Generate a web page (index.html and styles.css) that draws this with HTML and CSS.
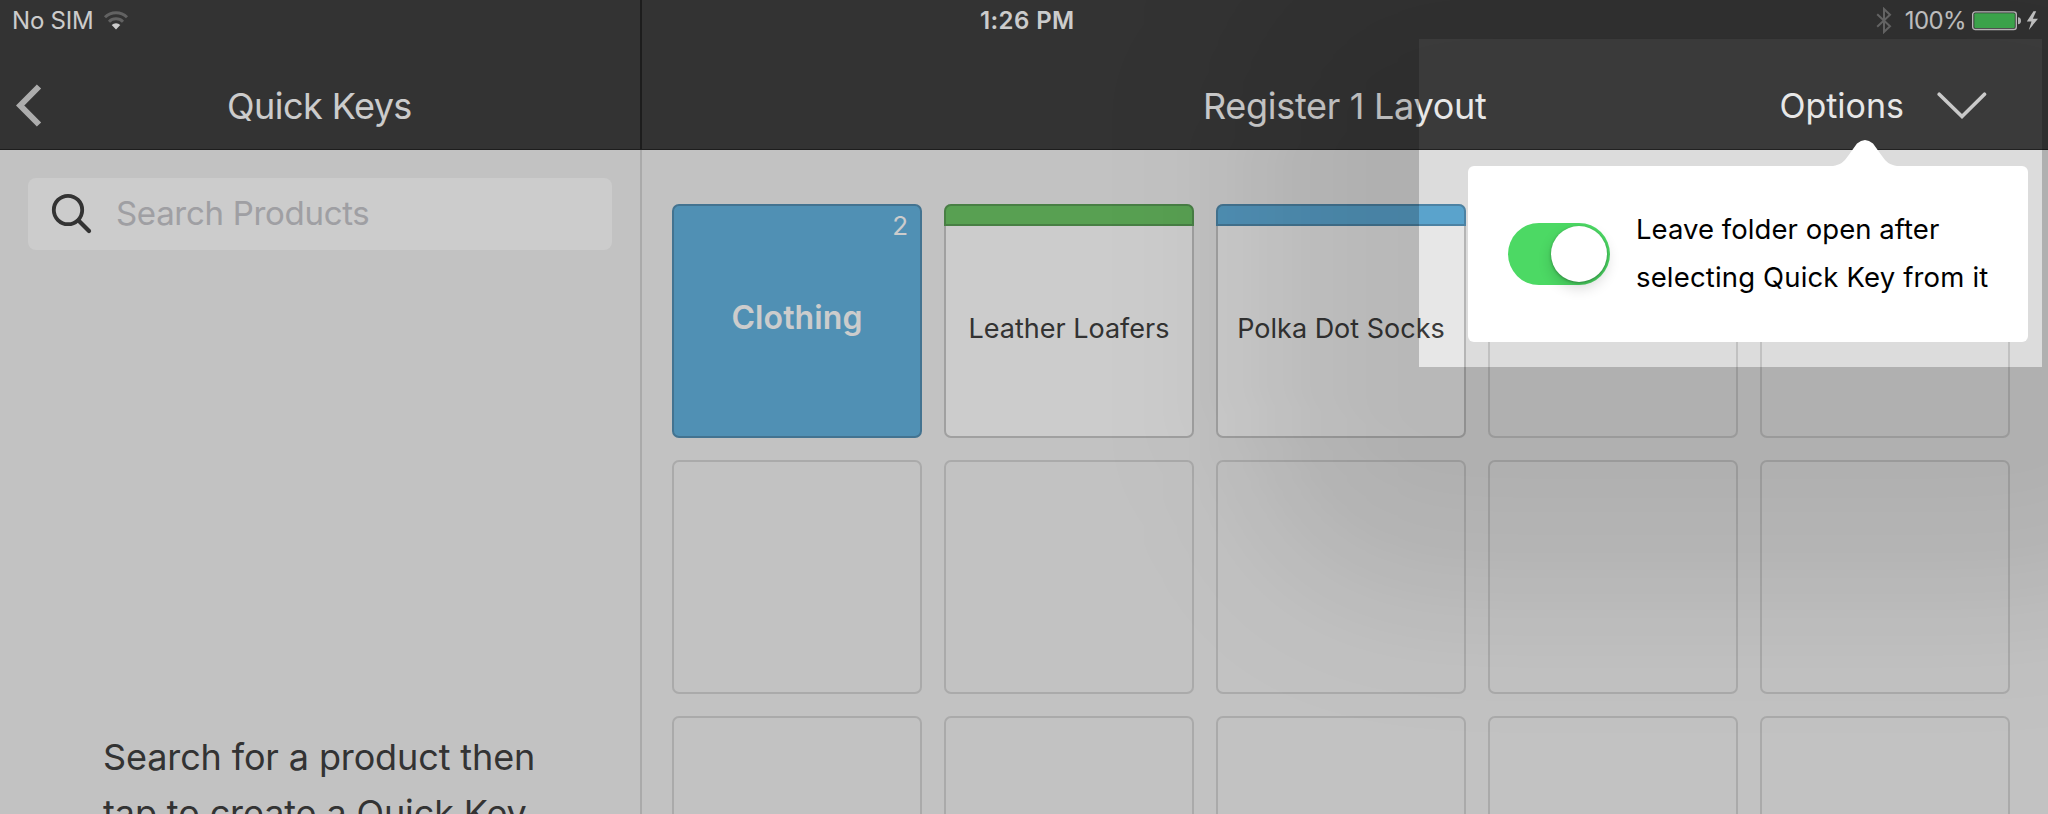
FILE: index.html
```
<!DOCTYPE html>
<html lang="en">
<head>
<meta charset="utf-8">
<title>Quick Keys</title>
<link rel="stylesheet" href="styles.css">
</head>
<body>
<div class="app">
  <aside class="sidebar">
    <header class="bar">
      <div class="status">
        <span class="carrier">No SIM</span>
        <svg class="wifi" width="26" height="20" viewBox="0 0 26 20">
          <path d="M2 6.2a15.6 15.6 0 0 1 22 0M6 10.7a10 10 0 0 1 14 0" fill="none" stroke="#7b7b7b" stroke-width="3"/>
          <path d="M13 18.5l-4.300-4.600a6.300 6.300 0 0 1 8.600 0z" fill="#fff"/>
        </svg>
      </div>
      <div class="titles left-titles">
        <svg class="back" width="26" height="44" viewBox="0 0 26 44"><path d="M23 2.500L4.200 21.500L23 40.500" fill="none" stroke="#d9d9d9" stroke-width="6"/></svg>
        <h1 class="title quick">Quick Keys</h1>
      </div>
    </header>
    <div class="sidebar-body">
      <div class="search">
        <svg width="42" height="42" viewBox="0 0 42 42"><circle cx="17" cy="17" r="14.200" fill="none" stroke="#404040" stroke-width="3.800"/><path d="M27.500 27.500L38 38" stroke="#404040" stroke-width="4.200" stroke-linecap="round"/></svg>
        <span class="placeholder">Search Products</span>
      </div>
      <p class="hint"><span class="hint-one">Search for a product then</span><br><span class="hint-two">tap to create a Quick Key</span></p>
    </div>
  </aside>
  <main class="main">
    <header class="bar">
      <div class="status main-status">
        <span class="clock">1:26 PM</span>
        <div class="power">
          <svg class="bt" width="16" height="27" viewBox="0 0 16 27"><path d="M1.200 7.200L14 19.300L8 25V2L14 7.700L1.200 19.800" fill="none" stroke="#868686" stroke-width="2"/></svg>
          <span class="percent">100%</span>
          <svg class="battery" width="70" height="20" viewBox="0 0 70 20"><rect x=".7" y=".9" width="43.600" height="17.600" rx="2.600" fill="none" stroke="#f4f4f4" stroke-width="1.400"/><rect x="2.300" y="2.300" width="40.500" height="14.800" rx="1" fill="#50dc65"/><path d="M46 6.300q3 .4 3 3.500t-3 3.500z" fill="#eee"/><path d="M61.500 .3L54.800 10.500H59.500L56.800 19L66 7.800H60.800L64.200 .3z" fill="#fff"/></svg>
        </div>
      </div>
      <div class="titles main-titles">
        <h2 class="title register">Register 1 Layout</h2>
        <span class="title options">Options</span>
        <svg class="chevron" width="50" height="28" viewBox="0 0 50 28"><path d="M2.200 2.200L25 24.500L47.500 2.200" fill="none" stroke="#dedede" stroke-width="3.600" stroke-linecap="round"/></svg>
      </div>
    </header>
    <div class="grid">
      <div class="tile folder"><span class="count">2</span><span class="folder-name">Clothing</span></div>
      <div class="tile product"><div class="stripe green"></div><span class="name loafers">Leather Loafers</span></div>
      <div class="tile product"><div class="stripe blue"></div><span class="name socks">Polka Dot Socks</span></div>
      <div class="tile"></div><div class="tile"></div>
      <div class="tile"></div><div class="tile"></div><div class="tile"></div><div class="tile"></div><div class="tile"></div>
      <div class="tile"></div><div class="tile"></div><div class="tile"></div><div class="tile"></div><div class="tile"></div>
    </div>
  </main>
  <div class="glow"></div>
  <div class="spotlight"></div>
  <section class="popover">
    <svg class="arrow" width="64" height="27" viewBox="0 0 64 27"><path d="M0 27V26C7 25 11 22 15 16L24 3.500Q32 -3.500 40 3.500L49 16C53 22 57 25 64 26V27z" fill="#fff"/></svg>
    <div class="toggle"><div class="knob"></div></div>
    <p class="message"><span class="msg-one">Leave folder open after</span><br><span class="msg-two">selecting Quick Key from it</span></p>
  </section>
</div>
</body>
</html>
```
FILE: styles.css
```
* { box-sizing: border-box; }
body { margin: 0; font-family: Inter, "Liberation Sans", sans-serif; }
h1, h2, p { margin: 0; font-weight: 400; }
svg { display: block; flex: none; }
.app { position: relative; display: flex; width: 2048px; height: 814px; overflow: hidden; background: #f3f3f3; white-space: nowrap; }
.sidebar { width: 642px; flex: none; border-right: 2px solid #d5d5d5; }
.main { flex: 1; }
.bar { height: 150px; background: #404040; border-bottom: 1px solid #252525; color: #fff; }
.sidebar .bar { width: 642px; border-right: 2px solid #252525; }
.status { display: flex; align-items: center; height: 41px; font-size: 24px; }
.carrier { width: 81px; margin-left: 12px; letter-spacing: -0.2px; }
.wifi { margin-left: 10px; }
.main-status { justify-content: space-between; padding-left: 338px; }
.clock { font-weight: 600; letter-spacing: 0.4px; }
.power { display: flex; align-items: center; padding-right: 6px; }
.bt { margin-right: 13px; }
.percent { margin-right: 6px; letter-spacing: -0.6px; }
.titles { display: flex; align-items: center; height: 108px; padding-top: 21px; }
.title { font-size: 36px; line-height: 44px; }
.left-titles { padding-left: 16px; }
.quick { margin-left: 185px; letter-spacing: -0.55px; }
.main-titles { padding-left: 561px; }
.register { letter-spacing: -0.3px; }
.options { margin-left: 293px; padding-top: 1px; font-size: 34px; }
.chevron { margin-left: 33px; }
.sidebar-body { height: 664px; padding: 28px; }
.search { display: flex; align-items: center; gap: 23px; width: 584px; height: 72px; padding-left: 23px; background: #fff; border-radius: 8px; }
.placeholder { font-size: 33px; letter-spacing: -0.3px; color: #c7c7cc; padding-bottom: 3px; }
.hint { font-size: 36px; line-height: 56px; color: #404040; margin: 479px 0 0 75px; letter-spacing: -0.12px; }
.grid { display: grid; grid-template-columns: repeat(5, 250px); grid-auto-rows: 234px; gap: 22px; padding: 54px 0 0 30px; }
.tile { border: 2px solid #d5d5d5; border-radius: 7px; }
.folder { position: relative; display: flex; align-items: center; justify-content: center; background: #64b4e2; border-color: #5490b4; color: #fff; }
.count { position: absolute; right: 12px; top: 3px; font-size: 26px; line-height: 34px; }
.folder-name { font-size: 32px; font-weight: 600; margin-bottom: 7px; letter-spacing: 0.1px; }
.product { background: #fff; border: 2px solid #c8c8c8; display: flex; flex-direction: column; }
.stripe { flex: none; height: 22px; margin: -2px -2px 0; border: 2px solid; border-radius: 7px 7px 0 0; }
.green { background: #6ec867; border-color: #5a9f56; }
.blue { background: #64b4e2; border-color: #5490b4; }
.name { flex: 1; display: flex; align-items: center; justify-content: center; color: #404040; font-size: 27px; padding-bottom: 5px; }
.glow { position: absolute; left: 1255px; top: -40px; width: 950px; height: 630px; background: rgba(0,0,0,.096); filter: blur(76px); border-radius: 160px; }
.spotlight { position: absolute; left: 1419px; top: 39px; width: 623px; height: 328px; box-shadow: 0 0 0 2000px rgba(0,0,0,.2); }
.popover { position: absolute; left: 1468px; top: 166px; width: 560px; height: 176px; padding-left: 40px; display: flex; align-items: center; background: #fff; border-radius: 6px; }
.arrow { position: absolute; left: 365px; top: -26px; }
.toggle { width: 102px; height: 62px; padding: 3px; display: flex; justify-content: flex-end; background: #4cd964; border-radius: 31px; flex: none; }
.knob { width: 56px; height: 56px; border-radius: 50%; background: #fff; box-shadow: 0 6px 14px rgba(0,0,0,.16), 0 1px 3px rgba(0,0,0,.3); }
.message { margin-left: 26px; padding-bottom: 2px; font-size: 27.500px; line-height: 48px; color: #000; }
.msg-one { letter-spacing: 0.05px; }
.msg-two { letter-spacing: 0.16px; }
```
